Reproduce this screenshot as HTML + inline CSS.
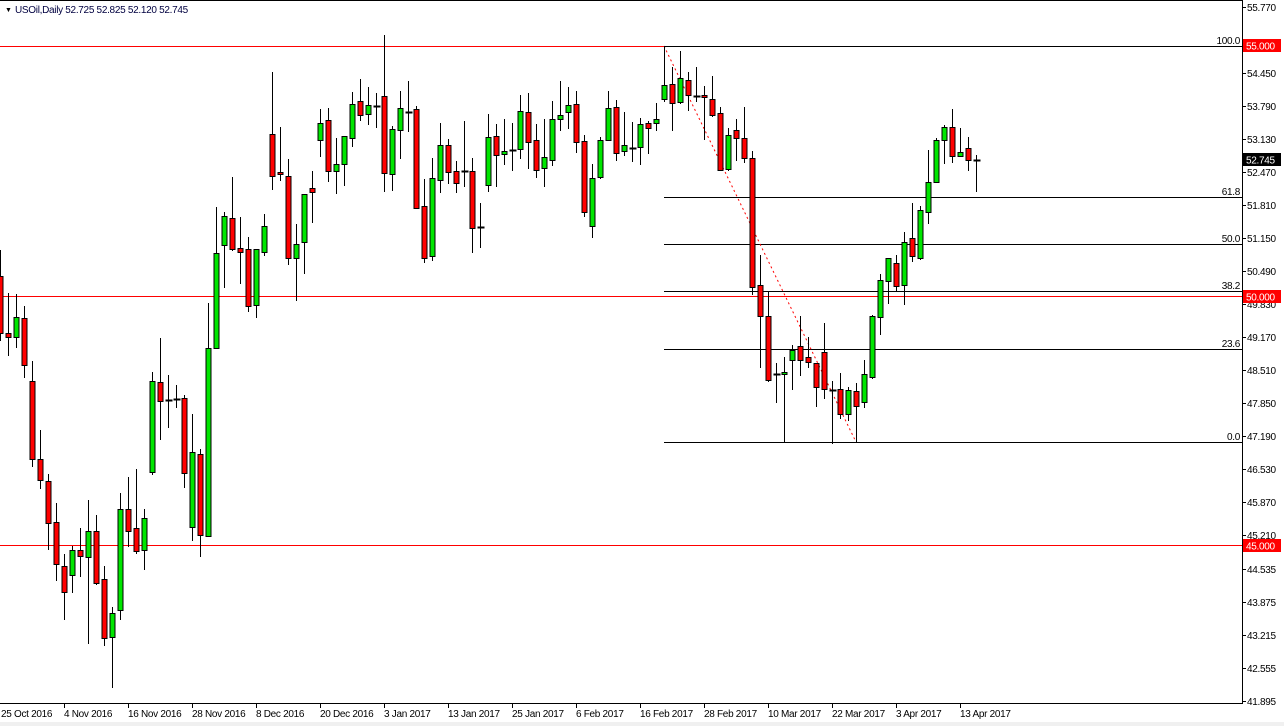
<!DOCTYPE html>
<html><head><meta charset="utf-8"><style>
html,body{margin:0;padding:0;background:#fff;}
body{width:1284px;height:726px;overflow:hidden;position:relative;font-family:"Liberation Sans",sans-serif;}
svg{position:absolute;left:0;top:0;}
text{font-family:"Liberation Sans",sans-serif;font-size:10px;letter-spacing:-0.3px;}
</style></head><body>
<svg id="s" width="1284" height="726" viewBox="0 0 1284 726" xmlns="http://www.w3.org/2000/svg" shape-rendering="crispEdges">
<rect x="0" y="722" width="1284" height="4" fill="#f0f0f0"/>
<line x1="0" y1="0.5" x2="1242" y2="0.5" stroke="#000"/>
<line x1="1242.5" y1="0" x2="1242.5" y2="704" stroke="#000"/>
<line x1="0" y1="703.5" x2="1243" y2="703.5" stroke="#000"/>
<g stroke="#f00" stroke-width="1">
<line x1="0" y1="46.5" x2="1242" y2="46.5"/>
<line x1="0" y1="296.5" x2="1242" y2="296.5"/>
<line x1="0" y1="545.5" x2="1242" y2="545.5"/>
</g>
<g stroke="#000">
<line x1="664" y1="46.5" x2="1242" y2="46.5"/>
<line x1="664" y1="197.5" x2="1242" y2="197.5"/>
<line x1="664" y1="244.5" x2="1242" y2="244.5"/>
<line x1="664" y1="291.5" x2="1242" y2="291.5"/>
<line x1="664" y1="349.5" x2="1242" y2="349.5"/>
<line x1="664" y1="442.5" x2="1242" y2="442.5"/>
</g>
<line x1="664" y1="46" x2="856" y2="442" stroke="#f00" stroke-dasharray="2,3" shape-rendering="auto"/>
<g id="c"></g>
<g fill="#000" text-anchor="end">
<text x="1240" y="44">100.0</text>
<text x="1240" y="195">61.8</text>
<text x="1240" y="242">50.0</text>
<text x="1240" y="289">38.2</text>
<text x="1240" y="347">23.6</text>
<text x="1240" y="440">0.0</text>
</g>
<g id="ax" fill="#000"></g>
<g fill="#000">
<text x="1" y="717">25 Oct 2016</text>
<text x="64" y="717">4 Nov 2016</text>
<text x="128" y="717">16 Nov 2016</text>
<text x="192" y="717">28 Nov 2016</text>
<text x="256" y="717">8 Dec 2016</text>
<text x="320" y="717">20 Dec 2016</text>
<text x="384" y="717">3 Jan 2017</text>
<text x="448" y="717">13 Jan 2017</text>
<text x="512" y="717">25 Jan 2017</text>
<text x="576" y="717">6 Feb 2017</text>
<text x="640" y="717">16 Feb 2017</text>
<text x="704" y="717">28 Feb 2017</text>
<text x="768" y="717">10 Mar 2017</text>
<text x="832" y="717">22 Mar 2017</text>
<text x="896" y="717">3 Apr 2017</text>
<text x="960" y="717">13 Apr 2017</text>
</g>
<g stroke="#000">
<line x1="64.5" y1="704" x2="64.5" y2="708"/><line x1="128.5" y1="704" x2="128.5" y2="708"/><line x1="192.5" y1="704" x2="192.5" y2="708"/><line x1="256.5" y1="704" x2="256.5" y2="708"/><line x1="320.5" y1="704" x2="320.5" y2="708"/><line x1="384.5" y1="704" x2="384.5" y2="708"/><line x1="448.5" y1="704" x2="448.5" y2="708"/><line x1="512.5" y1="704" x2="512.5" y2="708"/><line x1="576.5" y1="704" x2="576.5" y2="708"/><line x1="640.5" y1="704" x2="640.5" y2="708"/><line x1="704.5" y1="704" x2="704.5" y2="708"/><line x1="768.5" y1="704" x2="768.5" y2="708"/><line x1="832.5" y1="704" x2="832.5" y2="708"/><line x1="896.5" y1="704" x2="896.5" y2="708"/><line x1="960.5" y1="704" x2="960.5" y2="708"/>
</g>
<rect x="1243" y="39" width="38" height="13" fill="#f00"/>
<text x="1246" y="49.5" fill="#fff">55.000</text>
<rect x="1243" y="290" width="38" height="13" fill="#f00"/>
<text x="1246" y="300.5" fill="#fff">50.000</text>
<rect x="1243" y="539" width="38" height="13" fill="#f00"/>
<text x="1246" y="549.5" fill="#fff">45.000</text>
<rect x="1243" y="153" width="38" height="13" fill="#000"/>
<text x="1246" y="163.5" fill="#fff">52.745</text>
<text x="5" y="12" fill="#000" style="font-size:7px">▼</text>
<text x="15" y="13" fill="#000040">USOil,Daily  52.725 52.825 52.120 52.745</text>
</svg>
<script>
var d="0,250,340,276,333,r|8,293,355,333,337,r|16,294,347,317,337,g|24,306,377,318,365,r|32,361,466,381,459,r|40,430,488,459,480,r|48,474,549,481,523,r|56,503,580,522,564,r|64,554,619,566,592,r|72,546,592,550,575,g|80,528,576,550,556,r|88,500,643,531,557,g|96,515,584,531,583,r|104,566,645,579,638,r|112,607,687,613,637,g|120,493,619,509,610,g|128,477,546,509,531,r|136,469,553,528,551,r|144,509,569,518,550,g|152,372,474,381,472,g|160,338,439,382,401,r|168,375,427,400,400,d|176,385,407,399,399,d|184,395,487,398,473,r|192,414,540,452,527,g|200,449,556,454,535,r|208,303,536,348,536,g|216,207,348,253,348,g|224,212,287,216,245,g|232,177,250,218,249,r|240,217,283,248,252,r|248,237,311,249,306,r|256,249,317,249,305,g|264,214,255,226,252,g|272,72,189,134,176,r|280,127,180,172,174,r|288,159,264,176,258,r|296,224,300,244,258,g|304,194,273,194,242,g|312,171,222,188,192,r|320,109,156,123,140,g|328,108,181,120,171,r|336,138,193,164,171,g|344,136,185,136,164,g|352,92,146,104,138,g|360,79,120,101,115,r|368,87,124,105,114,g|376,93,127,106,106,d|384,35,191,96,173,r|392,126,190,129,174,g|400,91,158,108,130,g|408,81,131,112,112,d|416,106,208,109,208,r|424,179,262,206,258,r|432,158,260,178,256,g|440,123,192,145,180,g|448,139,183,145,172,r|456,161,192,171,183,r|464,121,186,171,171,d|472,158,252,171,228,r|480,203,247,227,227,d|488,114,191,137,185,g|496,124,186,136,155,r|504,119,164,151,154,g|512,123,170,150,150,d|520,95,158,111,149,g|528,93,168,112,142,r|536,124,177,140,170,r|544,119,186,157,168,g|552,101,165,119,160,g|560,81,130,115,119,g|568,87,128,105,112,g|576,91,152,104,142,r|584,135,216,141,212,r|592,164,237,178,226,g|600,137,178,140,177,g|608,91,140,108,140,g|616,100,160,107,153,r|624,112,155,145,151,g|632,122,161,148,148,d|640,118,164,124,147,g|648,121,153,123,128,r|656,103,130,119,123,g|664,46,101,85,99,g|672,67,130,84,103,r|680,51,103,78,102,g|688,72,110,80,95,r|696,67,101,96,96,d|704,86,139,95,97,r|712,76,116,99,115,r|720,107,170,113,170,r|728,128,170,135,169,g|736,119,160,130,138,r|744,107,162,138,158,r|752,151,294,158,287,r|760,255,367,285,316,r|768,291,381,316,380,r|776,363,402,374,374,d|784,357,442,372,374,g|792,345,389,350,360,g|800,316,375,346,360,r|808,337,367,357,362,r|816,363,406,363,387,r|824,323,398,352,389,r|832,381,443,390,390,d|840,373,418,389,414,r|848,387,420,390,414,g|856,383,442,391,406,r|864,360,407,374,402,g|872,315,378,316,377,g|880,274,334,280,317,g|888,258,303,258,281,g|896,255,291,263,286,r|904,232,304,242,285,g|912,203,261,238,256,r|920,206,259,210,258,g|928,150,223,182,212,g|936,138,182,140,182,g|944,125,163,127,140,g|952,109,162,127,156,r|960,128,156,152,156,g|968,137,170,148,160,r|976,155,191,160,160,d";
var ns="http://www.w3.org/2000/svg",g=document.getElementById("c");
function el(n,a){var e=document.createElementNS(ns,n);for(var k in a)e.setAttribute(k,a[k]);g.appendChild(e);}
d.split("|").forEach(function(s){var p=s.split(","),x=+p[0]+0.5,h=+p[1],l=+p[2],t=+p[3],b=+p[4],c=p[5];
el("line",{x1:x,y1:h,x2:x,y2:l+1,stroke:"#000"});
if(c=="d"){el("line",{x1:x-3,y1:t+0.5,x2:x+4,y2:t+0.5,stroke:"#000","stroke-width":2});}
else{if(b-t<2)b=t+2;el("rect",{x:x-2.5,y:t+0.5,width:5,height:b-t,fill:c=="g"?"#00e600":"#f00",stroke:"#000"});}});
var ax=document.getElementById("ax"),v=[55770,55110,54450,53790,53130,52470,51810,51150,50490,49830,49170,48510,47850,47190,46530,45870,45210,44535,43875,43215,42555,41895];
v.forEach(function(p){if(p==55110)return;var y=7+(55.77-p/1000)*50.02;var t=document.createElementNS(ns,"text");t.setAttribute("x",1247);t.setAttribute("y",Math.round(y)+4);t.textContent=(p/1000).toFixed(3);ax.appendChild(t);
var l=document.createElementNS(ns,"line");l.setAttribute("x1",1242);l.setAttribute("x2",1246);l.setAttribute("y1",Math.round(y)+0.5);l.setAttribute("y2",Math.round(y)+0.5);l.setAttribute("stroke","#000");ax.appendChild(l);});
</script>
</body></html>
